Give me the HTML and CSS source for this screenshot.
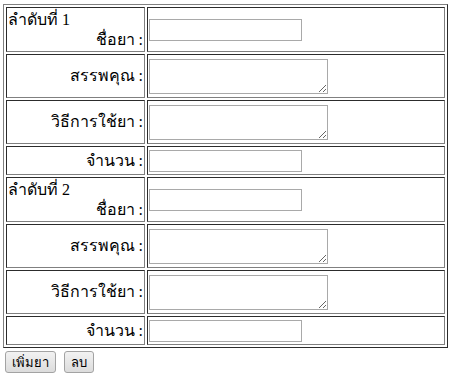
FILE: index.html
```html
<!DOCTYPE html>
<html lang="th">

<head>
    <meta charset="UTF-8">
    <meta name="viewport" content="width=device-width, initial-scale=1.0">
    <title>เพิ่มยา</title>
    <link rel="stylesheet" href="styles.css">
</head>

<body>
    <form class="drug_form">
        <!-- ตารางรายการยา -->
        <table class="drug_table">
            <!-- ยา 1 -->
            <tr class="row_name">
                <td class="label">
                    <div class="order">ลำดับที่ 1</div>ชื่อยา :
                </td>
                <td class="field"><input type="text" class="txt"></td>
            </tr>
            <tr class="row_area">
                <td class="label">สรรพคุณ :</td>
                <td class="field"><textarea class="area"></textarea></td>
            </tr>
            <tr class="row_area">
                <td class="label">วิธีการใช้ยา :</td>
                <td class="field"><textarea class="area"></textarea></td>
            </tr>
            <tr class="row_qty">
                <td class="label">จำนวน :</td>
                <td class="field"><input type="text" class="txt"></td>
            </tr>

            <!-- ยา 2 -->
            <tr class="row_name">
                <td class="label">
                    <div class="order">ลำดับที่ 2</div>ชื่อยา :
                </td>
                <td class="field"><input type="text" class="txt"></td>
            </tr>
            <tr class="row_area">
                <td class="label">สรรพคุณ :</td>
                <td class="field"><textarea class="area"></textarea></td>
            </tr>
            <tr class="row_area">
                <td class="label">วิธีการใช้ยา :</td>
                <td class="field"><textarea class="area"></textarea></td>
            </tr>
            <tr class="row_qty">
                <td class="label">จำนวน :</td>
                <td class="field"><input type="text" class="txt"></td>
            </tr>
        </table>

        <!-- ปุ่ม -->
        <div class="btn_box">
            <button type="button" class="btn">เพิ่มยา</button>
            <button type="button" class="btn">ลบ</button>
        </div>
    </form>
</body>

</html>
```

FILE: styles.css
```css
/* ตั้งค่าเริ่มต้น */

body {
    margin: 4px 3px;
    font-family: "Liberation Serif", "Times New Roman", serif;
    font-size: 16px;
    color: #000;
}

.drug_table {
    width: 445px;
    border: 1px outset gray;
    border-spacing: 2px;
}

.drug_table td {
    border: 1px inset gray;
    padding: 1px;
    vertical-align: middle;
}

.drug_table .label {
    width: 135px;
    text-align: right;
    line-height: 20px;
}

.drug_table .label .order {
    text-align: left;
}

.drug_table .row_name {
    height: 45px;
}

.drug_table .row_area {
    height: 44px;
}

.drug_table .row_qty {
    height: 29px;
}

.drug_table .field {
    padding-left: 1px;
}

.txt {
    display: block;
    width: 153px;
    height: 22px;
    margin: 0;
    border: 1px solid #a9a9a9;
    box-sizing: border-box;
    outline: none;
}

.area {
    display: block;
    width: 179px;
    height: 35px;
    margin: 0;
    border: 1px solid #a9a9a9;
    box-sizing: border-box;
    outline: none;
    resize: both;
}

.btn_box {
    display: flex;
    gap: 8px;
    margin: 3px 0 0 2px;
}

.btn {
    height: 22px;
    padding: 0 6px;
    font-family: Tahoma, "DejaVu Sans", sans-serif;
    font-size: 13px;
    color: #000;
    background: linear-gradient(#f2f2f2, #dcdcdc);
    border: 1px solid #a3a3a3;
    border-radius: 3px;
}
```
